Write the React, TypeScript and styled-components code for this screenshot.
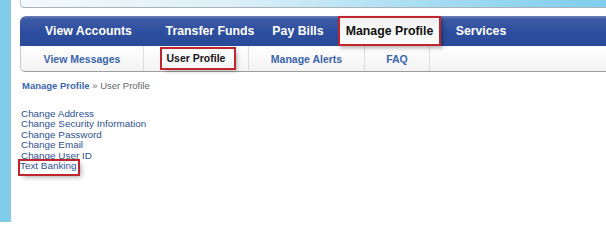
import React from 'react';
import styled, { createGlobalStyle } from 'styled-components';

const GlobalStyle = createGlobalStyle`
    body {
        margin: 0;
        background: #fff;
        font-family: 'Liberation Sans', Arial, sans-serif;
    }
`;

const Page = styled.div`
    display: flex;
    height: 222px;
    overflow: hidden;
`;

const SideStrip = styled.div`
    width: 11px;
    flex-shrink: 0;
    background: #80cce9;
`;

const Main = styled.div`
    flex: 1;
    min-width: 0;
    padding-left: 9px;
`;

const TopBand = styled.div`
    height: 7px;
    border-left: 1px solid #b7c2c8;
    border-bottom: 1px solid #a9b4ba;
    border-bottom-left-radius: 4px;
    background: linear-gradient(to right, #f3f9fc 0%, #dff0f8 35%, #a6dcf1 70%, #7fcdec 100%);
`;

const NavBar = styled.div`
    margin-top: 8px;
    height: 30px;
    display: flex;
    align-items: stretch;
    border-top-left-radius: 6px;
    background: linear-gradient(#7285b9 0px, #3d5aa6 3px, #2e4f9f 50%, #294a98 100%);
`;

const NavItem = styled.div<{ w: number }>`
    width: ${(p) => p.w}px;
    flex-shrink: 0;
    display: flex;
    align-items: center;
    justify-content: center;
    color: #fff;
    font-weight: bold;
    font-size: 12.3px;
    white-space: nowrap;
`;

const ActiveTab = styled(NavItem)`
    margin-left: 5px;
    color: #111;
    background: linear-gradient(#f1f1f1, #fdfdfd);
    outline: 2px solid #bf252c;
    outline-offset: -2px;
    box-shadow: 2px 2px 4px rgba(0, 0, 0, 0.3);
    position: relative;
    z-index: 1;
`;

const SubNav = styled.div`
    height: 25px;
    display: flex;
    border-left: 1px solid #c9c9c9;
    border-bottom: 1px solid #9d9d9d;
    border-bottom-left-radius: 5px;
    background: linear-gradient(#ffffff, #f3f3f3);
`;

const SubItem = styled.div<{ w: number; current?: boolean }>`
    width: ${(p) => p.w}px;
    box-sizing: border-box;
    flex-shrink: 0;
    display: flex;
    align-items: center;
    justify-content: center;
    border-right: 1px solid #dedede;
    font-weight: bold;
    font-size: 10.5px;
    color: ${(p) => (p.current ? '#151515' : '#3b64ad')};
    white-space: nowrap;
`;

const Marked = styled.span`
    display: inline-block;
    line-height: 19px;
    padding: 0 9px 0 5px;
    margin-left: 4px;
    outline: 2px solid #bf252c;
    box-shadow: 3px 3px 4px rgba(0, 0, 0, 0.3);
`;

const Crumbs = styled.div`
    margin-top: 8px;
    padding-left: 2px;
    font-size: 9.5px;
    line-height: 12px;
    color: #666;
    b {
        color: #3b67b1;
    }
`;

const LinkList = styled.ul`
    list-style: none;
    margin: 17px 0 0;
    padding: 0 0 0 1px;
    font-size: 9.9px;
    line-height: 10.4px;
    li {
        color: #2d5195;
        white-space: nowrap;
    }
`;

const MarkedLink = styled.span`
    display: inline-block;
    padding: 0 1px 3px 0;
    margin-left: -1px;
    outline: 2px solid #bf252c;
    box-shadow: 3px 3px 5px rgba(0, 0, 0, 0.35);
`;

const mainNav = [
    { label: 'View Accounts', w: 137 },
    { label: 'Transfer Funds', w: 106 },
    { label: 'Pay Bills', w: 70 },
];

const subNav = [
    { label: 'View Messages', w: 123 },
    { label: 'User Profile', w: 105, current: true },
    { label: 'Manage Alerts', w: 116 },
    { label: 'FAQ', w: 65 },
];

const links = ['Change Address', 'Change Security Information', 'Change Password', 'Change Email', 'Change User ID'];

const App = () => {
    return (
        <>
            <GlobalStyle />
            <Page>
                <SideStrip />
                <Main>
                    <TopBand />
                    <NavBar>
                        {mainNav.map((item) => (
                            <NavItem key={item.label} w={item.w}>
                                {item.label}
                            </NavItem>
                        ))}
                        <ActiveTab w={103}>Manage Profile</ActiveTab>
                        <NavItem w={80}>Services</NavItem>
                    </NavBar>
                    <SubNav>
                        {subNav.map((item) => (
                            <SubItem key={item.label} w={item.w} current={item.current}>
                                {item.current ? <Marked>{item.label}</Marked> : item.label}
                            </SubItem>
                        ))}
                    </SubNav>
                    <Crumbs>
                        <b>Manage Profile</b> » User Profile
                    </Crumbs>
                    <LinkList>
                        {links.map((l) => (
                            <li key={l}>{l}</li>
                        ))}
                        <li>
                            <MarkedLink>Text Banking</MarkedLink>
                        </li>
                    </LinkList>
                </Main>
            </Page>
        </>
    );
};

export default App;
